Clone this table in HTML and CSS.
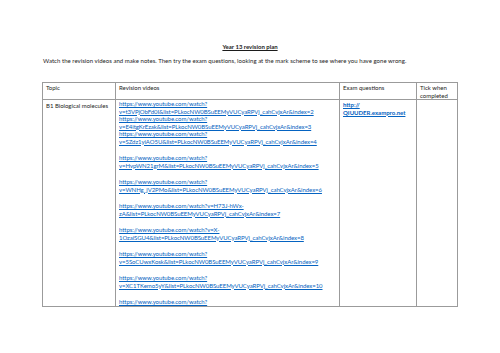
FILE: index.html
```html
<!DOCTYPE html>
<html>
<head>
<meta charset="utf-8">
<link rel="stylesheet" href="styles.css">
</head>
<body>
<div class="page">
  <p class="title">Year 13 revision plan</p>
  <p class="intro">Watch the revision videos and make notes. Then try the exam questions, looking at the mark scheme to see where you have gone wrong.</p>
  <table class="plan">
    <colgroup>
      <col class="c-topic"><col class="c-videos"><col class="c-exam"><col class="c-tick">
    </colgroup>
    <thead>
      <tr><th>Topic</th><th>Revision videos</th><th>Exam questions</th><th>Tick when completed</th></tr>
    </thead>
    <tbody>
      <tr>
        <td class="topic">B1 Biological molecules</td>
        <td class="videos">
          <div class="grp tight"><a href="#">https://www.youtube.com/watch?<br>v=t3VPjObFd0I&amp;list=PLkocNW0BSuEEMyVUCyaRPVj_cahCvjxAr&amp;index=2</a></div>
          <div class="grp tight"><a href="#">https://www.youtube.com/watch?<br>v=E4itgKrEzak&amp;list=PLkocNW0BSuEEMyVUCyaRPVj_cahCvjxAr&amp;index=3</a></div>
          <div class="grp"><a href="#">https://www.youtube.com/watch?<br>v=SZdz1yiAO5U&amp;list=PLkocNW0BSuEEMyVUCyaRPVj_cahCvjxAr&amp;index=4</a></div>
          <div class="grp"><a href="#">https://www.youtube.com/watch?<br>v=HvpWN21grM&amp;list=PLkocNW0BSuEEMyVUCyaRPVj_cahCvjxAr&amp;index=5</a></div>
          <div class="grp"><a href="#">https://www.youtube.com/watch?<br>v=WNHg_jV2PMo&amp;list=PLkocNW0BSuEEMyVUCyaRPVj_cahCvjxAr&amp;index=6</a></div>
          <div class="grp"><a href="#">https://www.youtube.com/watch?v=H73J-hWx-<br>zA&amp;list=PLkocNW0BSuEEMyVUCyaRPVj_cahCvjxAr&amp;index=7</a></div>
          <div class="grp"><a href="#">https://www.youtube.com/watch?v=X-<br>1OzaiSGU4&amp;list=PLkocNW0BSuEEMyVUCyaRPVj_cahCvjxAr&amp;index=8</a></div>
          <div class="grp"><a href="#">https://www.youtube.com/watch?<br>v=5SoCUwxKosk&amp;list=PLkocNW0BSuEEMyVUCyaRPVj_cahCvjxAr&amp;index=9</a></div>
          <div class="grp"><a href="#">https://www.youtube.com/watch?<br>v=XC1TKemo5yY&amp;list=PLkocNW0BSuEEMyVUCyaRPVj_cahCvjxAr&amp;index=10</a></div>
          <div class="grp last"><a href="#">https://www.youtube.com/watch?</a></div>
        </td>
        <td class="exam"><a href="#" class="strong">http://<br>QIUUDER.exampro.net</a></td>
        <td class="tick"></td>
      </tr>
    </tbody>
  </table>
</div>
</body>
</html>
```

FILE: styles.css
```css
html, body {
  margin: 0;
  padding: 0;
  background: #ffffff;
}
body {
  font-family: Lato, "Open Sans", "Liberation Sans", sans-serif;
  font-size: 6px;
  line-height: 7.5px;
  color: #1c1c1c;
}
.page {
  width: 416px;
  padding: 43px 0 0 42px;
}
.title {
  margin: 0;
  text-align: center;
  font-weight: bold;
  text-decoration: underline;
}
.intro {
  margin: 6px 0 0 1px;
  letter-spacing: 0.04px;
}
.plan {
  margin-top: 18px;
  border-collapse: collapse;
  table-layout: fixed;
  width: 416px;
}
.c-topic { width: 73px; }
.c-videos { width: 224px; }
.c-exam { width: 77px; }
.c-tick { width: 41px; }
.plan th, .plan td {
  border: 1px solid #9b9b9b;
  padding: 1px 2px 0 3px;
  vertical-align: top;
  text-align: left;
  font-weight: normal;
}
.plan th {
  height: 15px;
}
.plan td.topic {
  padding-top: 2px;
}
.plan td.videos {
  padding-top: 0;
  white-space: nowrap;
  letter-spacing: -0.06px;
}
a {
  color: #0563c1;
  text-decoration: underline;
}
a.strong {
  font-weight: bold;
}
.grp {
  margin-bottom: 9px;
}
.grp.tight {
  margin-bottom: 0;
}
.grp.last {
  margin-bottom: 0;
}
```
